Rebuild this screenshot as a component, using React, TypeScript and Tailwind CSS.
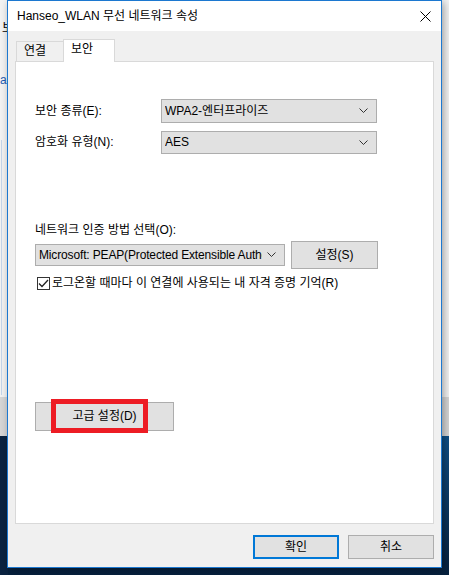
import React from "react";

const font = { fontFamily: '"Liberation Sans", "Noto Sans CJK KR", sans-serif' };

function Chevron() {
  return (
    <svg width="9" height="6" viewBox="0 0 9 6" className="shrink-0">
      <path d="M0.5 0.5 L4.5 4.5 L8.5 0.5" fill="none" stroke="#333" strokeWidth="1" />
    </svg>
  );
}

function Select({ text, className, textClass = "" }: { text: string; className: string; textClass?: string }) {
  return (
    <div className={`flex items-center border border-[#adadad] bg-[#e1e1e1] pl-[3px] pr-[8px] ${className}`}>
      <span className={`flex-1 min-w-0 overflow-hidden whitespace-nowrap mr-[5px] ${textClass}`}>{text}</span>
      <Chevron />
    </div>
  );
}

export default function App() {
  return (
    <div className="relative w-[449px] h-[575px] overflow-hidden bg-[#f3f3f3] text-[12px] leading-[15px] text-black" style={font}>
      {/* desktop background */}
      <div className="absolute left-0 top-[397px] w-[449px] h-[41px] bg-[#d6d6d6]" />
      <div className="absolute left-0 top-[436px] w-[449px] h-[139px] bg-gradient-to-b from-[#0f4f86] to-[#06203d]" />
      <div className="absolute left-0 top-[436px] w-[8px] h-[139px] bg-[#0a2341]" />
      <div className="absolute left-[1px] top-[140px] w-[1px] h-[255px] bg-[#c6d6ea]" />
      <div className="absolute left-[2px] top-[22px] w-[5px] overflow-hidden text-[12px] leading-none">보</div>
      <div className="absolute left-0 top-[74px] w-[7px] overflow-hidden text-[12px] leading-none text-[#1e5cb3]">al</div>

      {/* dialog window */}
      <div className="absolute left-[7px] top-0 w-[435px] h-[568px] border border-[#1c78d0] bg-[#f0f0f0] flex flex-col shadow-[2px_2px_8px_rgba(0,0,0,0.35)]">
        {/* title bar */}
        <div className="h-[30px] bg-white flex items-center justify-between pl-[9px] pr-[10px] shrink-0">
          <span className="text-[12px] leading-none">Hanseo_WLAN 무선 네트워크 속성</span>
          <svg width="11" height="11" viewBox="0 0 11 11">
            <path d="M0.5 0.5 L10.5 10.5 M10.5 0.5 L0.5 10.5" stroke="#000" strokeWidth="1" />
          </svg>
        </div>

        {/* tabs */}
        <div className="flex items-end pl-[8px] h-[30px] shrink-0 relative z-10">
          <div className="h-[20px] w-[48px] border border-b-0 border-[#d9d9d9] bg-[#f0f0f0] flex items-center pl-[7px]">
            연결
          </div>
          <div className="h-[23px] w-[52px] border border-b-0 border-[#d9d9d9] bg-white flex items-start pt-[2px] pl-[7px] ml-[-1px] mb-[-1px]">
            보안
          </div>
        </div>

        {/* panel */}
        <div className="mx-[7px] h-[463px] border border-[#d9d9d9] bg-white flex flex-col pl-[19px] shrink-0">
          <div className="flex items-center mt-[37px] h-[24px]">
            <span className="w-[126px]">보안 종류(E):</span>
            <Select text="WPA2-엔터프라이즈" className="w-[216px] h-[24px]" />
          </div>
          <div className="flex items-center mt-[8px] h-[23px]">
            <span className="w-[126px]">암호화 유형(N):</span>
            <Select text="AES" className="w-[216px] h-[23px]" />
          </div>
          <div className="mt-[69px] leading-[14px]">네트워크 인증 방법 선택(O):</div>
          <div className="flex items-center mt-[4px] gap-[6px]">
            <Select text="Microsoft: PEAP(Protected Extensible Authentication Protocol)" className="w-[250px] h-[22px]" textClass="tracking-[-0.15px]" />
            <div className="w-[87px] h-[28px] border border-[#adadad] bg-[#e1e1e1] flex items-center justify-center">설정(S)</div>
          </div>
          <div className="flex items-center mt-[7px] gap-[2px]">
            <div className="w-[13px] h-[13px] border border-[#333] bg-white flex items-center justify-center ml-[2px]">
              <svg width="11" height="9" viewBox="0 0 11 9">
                <path d="M1 4.5 L4 7.5 L10 1" fill="none" stroke="#222" strokeWidth="1.3" />
              </svg>
            </div>
            <span>로그온할 때마다 이 연결에 사용되는 내 자격 증명 기억(R)</span>
          </div>
          <div className="mt-[111px] relative w-[139px] h-[29px] border border-[#adadad] bg-[#e1e1e1] flex items-center justify-center">
            고급 설정(D)
            <div className="absolute left-[15px] top-[-4px] w-[97px] h-[34px] border-[5px] border-[#ed1c24]" />
          </div>
        </div>

        {/* bottom buttons */}
        <div className="flex justify-end gap-[9px] pr-[7px] mt-[11px]">
          <div className="w-[86px] h-[24px] border-2 border-[#0078d7] bg-[#e1e1e1] flex items-center justify-center">확인</div>
          <div className="w-[86px] h-[24px] border border-[#adadad] bg-[#e1e1e1] flex items-center justify-center">취소</div>
        </div>
      </div>
    </div>
  );
}
